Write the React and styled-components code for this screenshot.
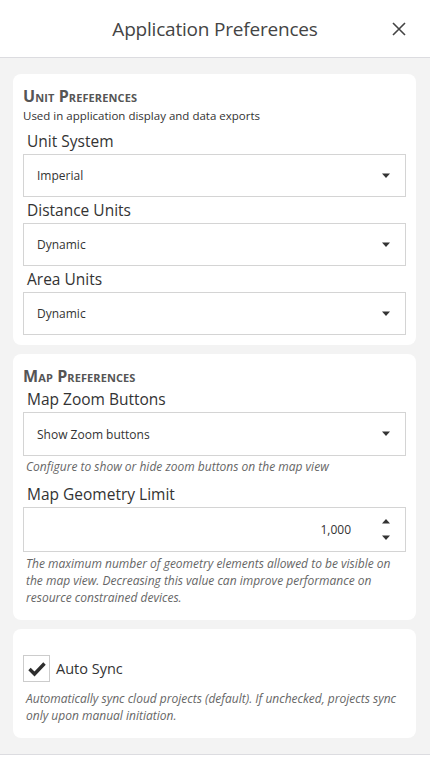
import React from "react";
import styled, { createGlobalStyle } from "styled-components";

const Global = createGlobalStyle`
  html, body { margin: 0; padding: 0; }
  body {
    font-family: "Open Sans", "Noto Sans", sans-serif;
    color: #333;
    background: #fff;
  }
  * { box-sizing: border-box; }
`;

const Page = styled.div`
  width: 430px;
  height: 775px;
  display: flex;
  flex-direction: column;
  background: #fff;
`;

const Header = styled.header`
  height: 58px;
  flex: none;
  display: flex;
  align-items: center;
  justify-content: center;
  position: relative;
  border-bottom: 1px solid #dcdce0;
`;

const Title = styled.h1`
  margin: 0;
  font-size: 19px;
  font-weight: 400;
  color: #444;
  letter-spacing: -0.2px;
`;

const Close = styled.button`
  position: absolute;
  right: 20px;
  top: 18px;
  width: 22px;
  height: 22px;
  border: 0;
  padding: 0;
  background: none;
  display: flex;
  align-items: center;
  justify-content: center;
`;

const Body = styled.main`
  background: #f3f3f3;
  padding: 16px 14px 16px 13px;
  display: flex;
  flex-direction: column;
  gap: 9px;
  border-bottom: 1px solid #dcdce0;
`;

const Card = styled.section`
  background: #fff;
  border-radius: 8px;
  padding: ${(p) => p.$pad || "12px 10px 10px 10px"};
  display: flex;
  flex-direction: column;
`;

const SectionTitle = styled.h2`
  margin: 0;
  font-size: 16px;
  font-weight: 700;
  font-variant: small-caps;
  color: #555;
  letter-spacing: 0.1px;
  line-height: 20px;
`;

const Subtitle = styled.p`
  margin: 0;
  padding: 1px 0 2px;
  font-size: 11.5px;
  line-height: 17px;
  color: #333;
`;

const Label = styled.label`
  display: block;
  font-size: 15.5px;
  line-height: 20px;
  color: #333;
  padding: ${(p) => (p.$tight ? "3px 4px 3px" : "5px 4px 3px")};
`;

const Field = styled.div`
  height: ${(p) => p.$h || 43}px;
  border: 1px solid #d4d4d4;
  display: flex;
  align-items: center;
  padding: 0 14px 0 13px;
  font-size: 12px;
  color: #333;
`;

const Value = styled.span`
  flex: 1;
  text-align: ${(p) => (p.$right ? "right" : "left")};
  padding-right: ${(p) => (p.$right ? "30px" : "0")};
`;

const Arrows = styled.div`
  display: flex;
  flex-direction: column;
  gap: 11px;
  align-items: center;
`;

const Help = styled.p`
  margin: 0;
  padding: ${(p) => p.$pad || "3px 3px 0"};
  font-size: 12px;
  line-height: 17px;
  font-style: italic;
  color: #666;
`;

const CheckRow = styled.div`
  display: flex;
  align-items: center;
  gap: 6px;
`;

const Box = styled.div`
  width: 27px;
  height: 27px;
  border: 1px solid #ccc;
  display: flex;
  align-items: center;
  justify-content: center;
`;

const CheckLabel = styled.span`
  font-size: 14.5px;
  color: #333;
`;

const Caret = ({ up }) => (
  <svg width="10" height="6" viewBox="0 0 10 6">
    {up ? <path d="M1 5.5 L5 1 L9 5.5 Z" fill="#333" /> : <path d="M1 0.5 L9 0.5 L5 5 Z" fill="#333" />}
  </svg>
);

const Select = ({ label, value, tight, h, children }) => (
  <>
    <Label $tight={tight}>{label}</Label>
    <Field $h={h}>
      <Value>{value}</Value>
      <Caret />
    </Field>
    {children}
  </>
);

export default function App() {
  return (
    <Page>
      <Global />
      <Header>
        <Title>Application Preferences</Title>
        <Close aria-label="Close">
          <svg width="16" height="16" viewBox="0 0 16 16">
            <path d="M2 2 L14 14 M14 2 L2 14" stroke="#444" strokeWidth="1.6" />
          </svg>
        </Close>
      </Header>
      <Body>
        <Card $pad="12px 10px 10px 10px">
          <SectionTitle>Unit Preferences</SectionTitle>
          <Subtitle>Used in application display and data exports</Subtitle>
          <Select label="Unit System" value="Imperial" />
          <Select label="Distance Units" value="Dynamic" tight />
          <Select label="Area Units" value="Dynamic" tight />
        </Card>
        <Card $pad="12px 10px 14px 10px">
          <SectionTitle>Map Preferences</SectionTitle>
          <Select label="Map Zoom Buttons" value="Show Zoom buttons" tight h={44}>
            <Help $pad="2px 3px 6px">Configure to show or hide zoom buttons on the map view</Help>
          </Select>
          <Label $tight>Map Geometry Limit</Label>
          <Field $h={45}>
            <Value $right>1,000</Value>
            <Arrows>
              <Caret up />
              <Caret />
            </Arrows>
          </Field>
          <Help $pad="3px 3px 0">
            The maximum number of geometry elements allowed to be visible on the map view. Decreasing this value can
            improve performance on resource constrained devices.
          </Help>
        </Card>
        <Card $pad="26px 10px 14px 10px">
          <CheckRow>
            <Box>
              <svg width="20" height="18" viewBox="0 0 20 18">
                <path d="M2.5 9 L7.5 14 L17.5 3.5" fill="none" stroke="#2e2e2e" strokeWidth="3.4" />
              </svg>
            </Box>
            <CheckLabel>Auto Sync</CheckLabel>
          </CheckRow>
          <Help $pad="8px 3px 0">
            Automatically sync cloud projects (default). If unchecked, projects sync only upon manual initiation.
          </Help>
        </Card>
      </Body>
    </Page>
  );
}
